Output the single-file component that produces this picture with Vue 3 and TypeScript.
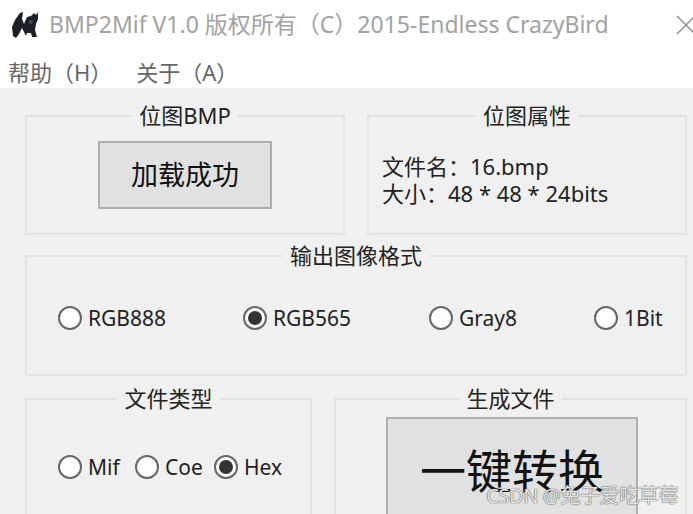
<script setup lang="ts">
interface Radio {
  label: string;
  checked?: boolean;
}

const formats: Radio[] = [
  { label: 'RGB888' },
  { label: 'RGB565', checked: true },
  { label: 'Gray8' },
  { label: '1Bit' }
];

const fileTypes: Radio[] = [
  { label: 'Mif' },
  { label: 'Coe' },
  { label: 'Hex', checked: true }
];
</script>

<template>
  <div class="window">
    <header class="titlebar">
      <svg class="logo" width="28" height="28" viewBox="0 0 28 28">
        <path
          d="M2 25 L1 16 L4 9 L9 2 L12 1 L11 8 L13 13 L16 6 L20 5 L23 2 L25 4 L27 1 L27 8 L25 13 L24 19 L26 26 L21 26 L20 22 L16 22 L15 25 L13 21 L11 17 L8 23 L5 27 Z"
          fill="#1c2129"
        />
        <circle cx="20" cy="11" r="2" fill="#3b4a5c" />
      </svg>
      <span class="title">BMP2Mif V1.0 版权所有（C）2015-Endless CrazyBird</span>
      <svg class="close" width="20" height="20" viewBox="0 0 20 20">
        <path d="M1 1 L19 19 M19 1 L1 19" stroke="#8a8a8a" stroke-width="1.3" fill="none" />
      </svg>
    </header>

    <nav class="menubar">
      <span>帮助（H）</span>
      <span>关于（A）</span>
    </nav>

    <main class="client">
      <div class="row row-top">
        <fieldset class="group">
          <legend>位图BMP</legend>
          <div class="bmp-body">
            <button class="btn btn-load">加载成功</button>
          </div>
        </fieldset>
        <fieldset class="group">
          <legend>位图属性</legend>
          <div class="props">
            <div>文件名：16.bmp</div>
            <div>大小：48 * 48 * 24bits</div>
          </div>
        </fieldset>
      </div>

      <fieldset class="group group-format">
        <legend>输出图像格式</legend>
        <div class="format-row">
          <label v-for="r in formats" :key="r.label" class="radio">
            <i class="dot" :class="{ on: r.checked }"></i>{{ r.label }}
          </label>
        </div>
      </fieldset>

      <div class="row row-bottom">
        <fieldset class="group">
          <legend>文件类型</legend>
          <div class="type-row">
            <label v-for="r in fileTypes" :key="r.label" class="radio">
              <i class="dot" :class="{ on: r.checked }"></i>{{ r.label }}
            </label>
          </div>
        </fieldset>
        <fieldset class="group">
          <legend>生成文件</legend>
          <button class="btn btn-convert">一键转换</button>
        </fieldset>
      </div>
    </main>

    <div class="watermark">CSDN @兔子爱吃草莓</div>
  </div>
</template>

<style>
html,
body {
  margin: 0;
  overflow: hidden;
  background: #fff;
}
</style>

<style scoped>
.window {
  position: relative;
  width: 693px;
  height: 514px;
  overflow: hidden;
  background: #fff;
  font-family: "Noto Sans", "Noto Sans CJK SC", sans-serif;
  color: #222;
  font-size: 22px;
  text-spacing-trim: space-all;
}

.titlebar {
  display: flex;
  align-items: center;
  height: 50px;
  padding-left: 11px;
}

.logo {
  flex: none;
  margin-right: 10px;
  filter: blur(0.5px);
}

.title {
  flex: 1;
  font-size: 23px;
  line-height: 30px;
  padding-bottom: 2px;
  color: #a2a2a2;
  white-space: nowrap;
}

.close {
  flex: none;
  transform: translateX(3px);
}

.menubar {
  display: flex;
  gap: 24px;
  height: 38px;
  box-sizing: border-box;
  padding: 4px 0 0 8px;
  align-items: center;
  font-size: 22px;
  color: #666;
}

.client {
  height: 426px;
  box-sizing: border-box;
  padding: 17px 6px 0 25px;
  background: #f0f0f0;
}

.row {
  display: grid;
}

.row-top {
  grid-template-columns: 320px 320px;
  column-gap: 22px;
}

.row-top .group {
  height: 130px;
  box-sizing: border-box;
}

.row-bottom {
  grid-template-columns: 287px 353px;
  column-gap: 22px;
  margin-top: 12px;
}

.group {
  margin: 0;
  padding: 0;
  min-width: 0;
  border: 2px solid #e3e3e3;
}

.group legend {
  margin: 0 auto;
  padding: 0 7px 2px;
  font-size: 22px;
  line-height: 20px;
  color: #222;
}

.bmp-body {
  padding-top: 14px;
  display: flex;
  justify-content: center;
}

.btn {
  display: block;
  box-sizing: border-box;
  background: #e1e1e1;
  border: 2px solid #adadad;
  font-family: inherit;
  color: #111;
}

.btn-load {
  width: 174px;
  height: 68px;
  padding: 0 0 3px;
  font-size: 27px;
}

.props {
  padding: 26px 0 0 13px;
  font-size: 22px;
  line-height: 27px;
}

.group-format {
  margin-top: 10px;
  height: 131px;
  box-sizing: border-box;
}

.format-row {
  display: grid;
  grid-template-columns: 185px 186px 165px auto;
  padding: 38px 0 0 31px;
}

.radio {
  display: inline-flex;
  align-items: center;
  gap: 6px;
  line-height: 26px;
  font-size: 21px;
  white-space: nowrap;
}

.dot {
  flex: none;
  position: relative;
  box-sizing: border-box;
  width: 24px;
  height: 24px;
  border: 2px solid #666;
  border-radius: 50%;
  background: #fff;
}

.dot.on::after {
  content: "";
  position: absolute;
  inset: 3px;
  border-radius: 50%;
  background: #333;
}

.row-bottom .group {
  height: 140px;
  box-sizing: border-box;
}

.type-row {
  display: grid;
  grid-template-columns: 77px 79px auto;
  padding: 44px 0 0 31px;
}

.btn-convert {
  width: 252px;
  height: 106px;
  margin: 7px 0 0 50px;
  padding: 0 0 5px;
  font-size: 46px;
}

.watermark {
  position: absolute;
  right: 15px;
  bottom: 5px;
  font-size: 20px;
  letter-spacing: -0.4px;
  white-space: nowrap;
  color: #e4e4e4;
  text-shadow: 0 0 1px #555, 0 0 1px #555;
}
</style>
